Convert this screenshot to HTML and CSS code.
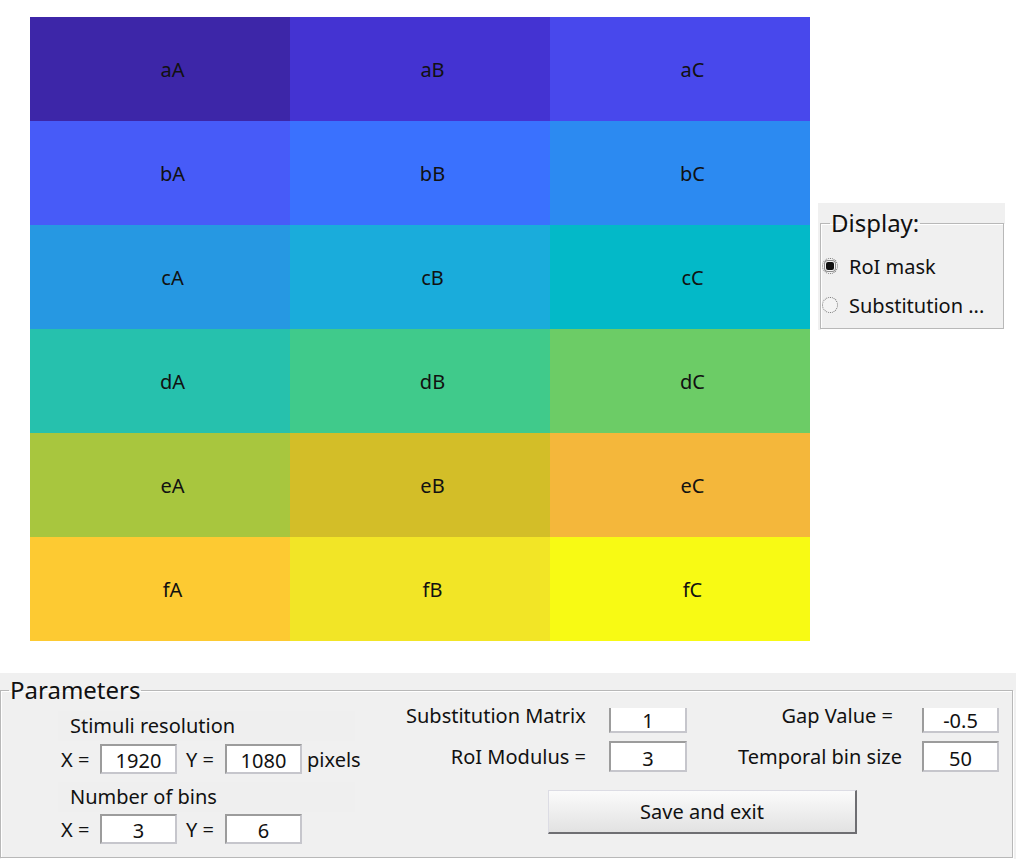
FILE: index.html
```html
<!DOCTYPE html>
<html>
<head>
<meta charset="utf-8">
<link rel="stylesheet" href="styles.css">
</head>
<body>
<div class="top">
  <div class="grid">
    <div class="cell" style="background:#3d26a8">aA</div>
    <div class="cell" style="background:#4433d2">aB</div>
    <div class="cell" style="background:#4848ec">aC</div>
    <div class="cell" style="background:#475bf8">bA</div>
    <div class="cell" style="background:#3a71fe">bB</div>
    <div class="cell" style="background:#2c8af1">bC</div>
    <div class="cell" style="background:#2698e2">cA</div>
    <div class="cell" style="background:#1aacdb">cB</div>
    <div class="cell" style="background:#03b9c8">cC</div>
    <div class="cell" style="background:#26c1ad">dA</div>
    <div class="cell" style="background:#40ca8b">dB</div>
    <div class="cell" style="background:#6ccc66">dC</div>
    <div class="cell" style="background:#a8c63e">eA</div>
    <div class="cell" style="background:#d3be28">eB</div>
    <div class="cell" style="background:#f4b73b">eC</div>
    <div class="cell" style="background:#fdca32">fA</div>
    <div class="cell" style="background:#f2e526">fB</div>
    <div class="cell" style="background:#f8fa14">fC</div>
  </div>
  <div class="display-box">
    <fieldset class="display">
      <legend>Display:</legend>
      <div class="radio-row"><span class="radio checked"></span><span>RoI mask</span></div>
      <div class="radio-row"><span class="radio"></span><span>Substitution ...</span></div>
    </fieldset>
  </div>
</div>
<div class="params-box">
  <fieldset class="params">
    <legend>Parameters</legend>
    <div class="params-body">
      <div class="left">
        <div class="sublabel first">Stimuli resolution</div>
        <div class="row r1">
          <span class="eq x">X =</span><span class="input">1920</span>
          <span class="eq y">Y =</span><span class="input">1080</span>
          <span class="unit">pixels</span>
        </div>
        <div class="sublabel second">Number of bins</div>
        <div class="row r2">
          <span class="eq x">X =</span><span class="input">3</span>
          <span class="eq y">Y =</span><span class="input">6</span>
        </div>
      </div>
      <div class="right">
        <div class="lbl top-lbl sm">Substitution Matrix</div>
        <span class="input clip">1</span>
        <div></div>
        <div class="lbl top-lbl gv">Gap Value =</div>
        <span class="input clip">-0.5</span>
        <div class="lbl mid-lbl rm">RoI Modulus =</div>
        <span class="input">3</span>
        <div></div>
        <div class="lbl mid-lbl tb">Temporal bin size</div>
        <span class="input">50</span>
        <button class="save">Save and exit</button>
      </div>
    </div>
  </fieldset>
</div>
</body>
</html>
```
FILE: styles.css
```css
* { box-sizing: border-box; }
html, body { margin: 0; padding: 0; background: #fff; }
body {
  width: 1016px;
  height: 859px;
  overflow: hidden;
  font-family: "Noto Sans", "Open Sans", sans-serif;
  color: #111;
}
.top {
  height: 673px;
  padding: 17px 0 0 30px;
  display: flex;
  align-items: flex-start;
}
.grid {
  display: grid;
  grid-template-columns: repeat(3, 260px);
  grid-auto-rows: 104px;
}
.cell {
  display: flex;
  align-items: center;
  justify-content: center;
  padding: 1px 0 0 25px;
  font-size: 20px;
  color: #111;
}
.display-box {
  margin: 186px 0 0 8px;
  width: 187px;
  height: 127px;
  background: #f0f0f0;
  padding: 6px 0 0 2px;
}
fieldset {
  margin: 0;
  padding: 0;
  border: 1px solid #b8b8b8;
  box-shadow: inset 1px 1px 0 #fff, 1px 1px 0 #fff;
}
legend {
  font-size: 24px;
  line-height: 28px;
  padding: 0 1px;
  margin-left: 8px;
  color: #111;
}
.display {
  width: 184px;
  height: 120px;
  padding: 15px 0 0 1px;
}
.radio-row {
  display: flex;
  align-items: center;
  height: 28px;
  font-size: 20px;
  margin-bottom: 11px;
}
.radio {
  width: 16px;
  height: 16px;
  border-radius: 50%;
  border: 1px dotted #6f6f6f;
  background: #f4f4f4;
  margin-right: 11px;
  display: flex;
  align-items: center;
  justify-content: center;
}
.radio.checked::after {
  content: "";
  width: 8px;
  height: 8px;
  border-radius: 2px;
  background: #111;
  box-shadow: 0 0 0 1px #f4f4f4, 0 0 0 2px #8c8c8c;
}
.params-box {
  height: 186px;
  background: #f0f0f0;
  padding-top: 3px;
}
.params {
  width: 1013px;
  height: 182px;
}
.params-body {
  display: flex;
  font-size: 20px;
}
.left {
  width: 405px;
  padding-left: 57px;
}
.sublabel {
  height: 30px;
  line-height: 30px;
  padding-left: 12px;
  width: 297px;
  background: #efefef;
}
.sublabel.first { margin-top: 7px; }
.sublabel.second { margin-top: 8px; }
.row {
  display: flex;
  align-items: center;
  height: 30px;
}
.row.r1 { margin-top: 3px; }
.row.r2 { margin-top: 2px; }
.eq.x { width: 42px; padding-left: 3px; }
.eq.y { width: 48px; padding-left: 9px; }
.unit { padding-left: 5px; }
.input {
  display: flex;
  align-items: center;
  justify-content: center;
  width: 77px;
  height: 30px;
  padding-top: 3px;
  background: #fff;
  border: 2px solid #c6c6cc;
  border-top-color: #9c9c9c;
  border-left-color: #9c9c9c;
  font-size: 20px;
}
.input.clip {
  border-top: none;
  height: 25px;
  padding-top: 2px;
}
.right {
  display: grid;
  grid-template-columns: 203px 78px 51px 184px 77px;
  grid-template-rows: 25px 31px 44px;
  row-gap: 8px;
  margin-top: 4px;
}
.right .input { width: auto; height: 31px; }
.right .input.clip { height: 25px; }
.lbl { white-space: nowrap; }
.top-lbl { align-self: start; line-height: 20px; margin-top: -2px; }
.mid-lbl { align-self: center; text-align: right; }
.sm { text-align: left; }
.gv { text-align: right; padding-right: 29px; }
.rm { padding-right: 23px; }
.tb { padding-right: 22px; }
.save {
  grid-column: 1 / -1;
  margin: 10px 0 0 142px;
  width: 309px;
  height: 44px;
  font-family: inherit;
  font-size: 20px;
  color: #111;
  background: linear-gradient(#fbfbfb, #e2e2e2);
  border: 1px solid #dcdce4;
  border-right: 2px solid #6e6e72;
  border-bottom: 2px solid #6e6e72;
  padding: 0;
}
```
